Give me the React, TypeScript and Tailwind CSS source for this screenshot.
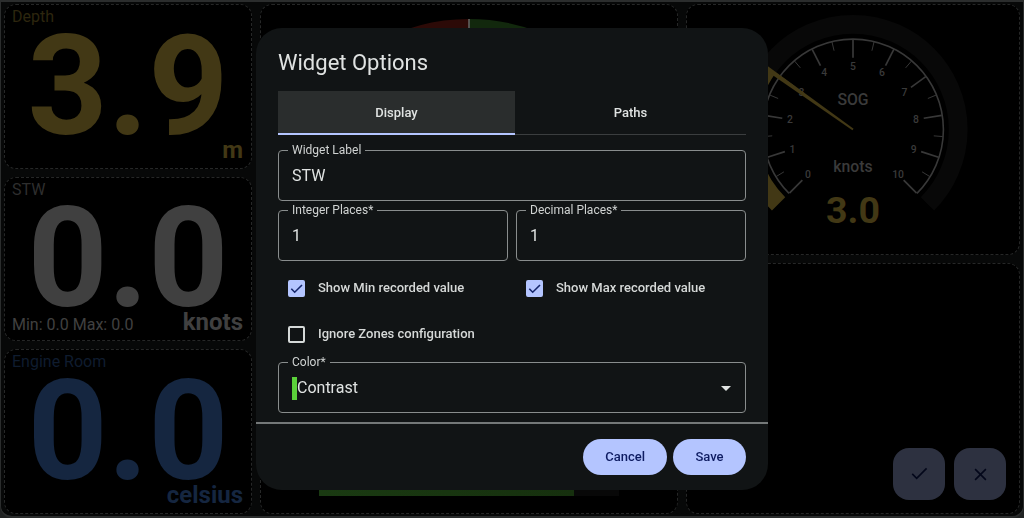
import { useState, type ReactNode } from "react";

type NumericProps = {
  label: string;
  value: string;
  unit: string;
  tone: string;
  labelTone: string;
  range?: string;
};

const cardClass =
  "grid min-h-0 min-w-0 overflow-hidden rounded-xl border border-dashed border-[#262727] bg-black";

function NumericWidget({ label, value, unit, tone, labelTone, range }: NumericProps) {
  return (
    <section className={`${cardClass} grid-rows-[auto_1fr_auto] px-[7px] pt-0.5 pb-1 ${tone}`}>
      <h2 className={`text-base leading-5 ${labelTone}`}>{label}</h2>
      <p className="self-end justify-self-center text-[140px] leading-[100px] font-bold">{value}</p>
      <div className="flex items-end justify-between">
        <span className="text-base leading-[22px]">{range}</span>
        <span className="pr-px text-2xl leading-7 font-bold">{unit}</span>
      </div>
    </section>
  );
}

const polar = (angle: number, radius: number): [number, number] => {
  const rad = (angle * Math.PI) / 180;
  return [Math.sin(rad) * radius, -Math.cos(rad) * radius];
};

function arc(from: number, to: number, radius: number) {
  const [x1, y1] = polar(from, radius);
  const [x2, y2] = polar(to, radius);
  return `M${x1} ${y1}A${radius} ${radius} 0 ${to - from > 180 ? 1 : 0} 1 ${x2} ${y2}`;
}

function SpeedGauge() {
  const ticks = Array.from({ length: 21 }, (_, i) => i);
  return (
    <section className={cardClass}>
      <svg viewBox="-167 -126 334 252" className="size-full" role="img" aria-label="SOG 3.0 knots">
        <path d={arc(-135, 135, 106.5)} fill="none" stroke="#080808" strokeWidth="19" />
        <path d={arc(-135, -54, 106.5)} fill="none" stroke="#423815" strokeWidth="19" />
        <path d={arc(-135, 135, 91.5)} fill="none" stroke="#383838" strokeWidth="1.6" />
        {ticks.map((i) => {
          const angle = -135 + i * 13.5;
          const [x1, y1] = polar(angle, 91);
          const [x2, y2] = polar(angle, i % 2 ? 82 : 72.5);
          return (
            <line key={i} x1={x1} y1={y1} x2={x2} y2={y2} stroke="#383838" strokeWidth={i % 2 ? 1 : 1.7} />
          );
        })}
        {ticks
          .filter((i) => i % 2 === 0)
          .map((i) => {
            const [x, y] = polar(-135 + i * 13.5, 64.5);
            return (
              <text key={i} x={x} y={y + 3.8} textAnchor="middle" fontSize="10.5" fontWeight="500" fill="#3a3a3a">
                {i / 2}
              </text>
            );
          })}
        <path d="M.6-.8-.6.8-90-61-87.500-65Z" fill="#423815" />
        <text y="-25" textAnchor="middle" fontSize="16" fontWeight="500" fill="#3a3a3a">
          SOG
        </text>
        <text y="43" textAnchor="middle" fontSize="16" fontWeight="500" fill="#3a3a3a">
          knots
        </text>
        <text y="95" textAnchor="middle" fontSize="38" fontWeight="700" fill="#423815">
          3.0
        </text>
      </svg>
    </section>
  );
}

function WindWidget() {
  return (
    <section className="flex min-h-0 min-w-0 flex-col items-center justify-between overflow-hidden rounded-xl border border-dashed border-[#262727] bg-black pt-3.5 pb-[17px]">
      <svg viewBox="-191 -191 382 382" className="w-[382px]" aria-hidden="true">
        <path d={arc(-60, 0, 184)} fill="none" stroke="#2c0a07" strokeWidth="14" />
        <path d={arc(0, 60, 184)} fill="none" stroke="#12280d" strokeWidth="14" />
        <path d="M0-191V-177" stroke="#666" strokeWidth="1.500" />
        <path d="M-32.500-182-31-174M32.500-182 31-174" stroke="#444" />
      </svg>
      <div className="flex h-4 w-[300px] bg-[#080808]">
        <div className="w-[85%] bg-linear-to-r from-[#1a3a12] to-[#16300e]" />
      </div>
    </section>
  );
}

function Field({ id, label, children }: { id: string; label: string; children: ReactNode }) {
  return (
    <fieldset className="h-[59px] min-w-0 rounded border border-[#898d8d] pr-2.5 pl-[9px]">
      <legend className="h-4 px-1 text-xs leading-4 text-[#d0d3d2]">
        <label htmlFor={id}>{label}</label>
      </legend>
      <div className="flex h-9 items-center px-1">{children}</div>
    </fieldset>
  );
}

function TextField({ id, label, initial }: { id: string; label: string; initial: string }) {
  return (
    <Field id={id} label={label}>
      <input
        id={id}
        defaultValue={initial}
        className="w-full bg-transparent text-base leading-6 text-[#e0e3e2] outline-none"
      />
    </Field>
  );
}

function Check({ label, initial = false }: { label: string; initial?: boolean }) {
  const [checked, setChecked] = useState(initial);
  return (
    <label className="flex h-10 items-center gap-[13px] pl-2.5 text-[13px] font-medium text-[#d6d9d8]">
      <span className="grid size-[17px]">
        <input
          type="checkbox"
          checked={checked}
          onChange={(e) => setChecked(e.target.checked)}
          className="size-[17px] appearance-none rounded-xs border-2 border-[#d5d9d8] [grid-area:1/1] checked:border-[#b4c5ff] checked:bg-[#b4c5ff]"
        />
        {checked && (
          <svg viewBox="0 0 17 17" className="pointer-events-none size-[17px] [grid-area:1/1]" aria-hidden="true">
            <path d="m3.300 8.800 3.400 3.400 7.300-7.200" fill="none" stroke="#14256b" strokeWidth="1.600" />
          </svg>
        )}
      </span>
      {label}
    </label>
  );
}

function OptionsDialog() {
  const [tab, setTab] = useState("Display");
  return (
    <div
      role="dialog"
      aria-label="Widget Options"
      className="w-full max-w-lg overflow-hidden rounded-[26px] bg-[#111415]"
    >
      <h1 className="px-[22px] pt-5 pb-[13px] text-[22px] leading-[30px] text-[#e0e3e2]">Widget Options</h1>
      <div className="px-[22px] pb-[9px]">
        <div role="tablist" className="grid grid-cols-[237fr_231fr]">
          {["Display", "Paths"].map((name) => (
            <button
              key={name}
              role="tab"
              aria-selected={tab === name}
              onClick={() => setTab(name)}
              className={
                tab === name
                  ? "h-11 border-b-2 border-[#b4c5ff] bg-[#2a2d2d] pt-px text-[13px] font-medium text-[#e0e3e2]"
                  : "h-11 border-b border-[#3b3e3f] text-[13px] font-medium text-[#e0e3e2]"
              }
            >
              {name}
            </button>
          ))}
        </div>
        <div className="mt-[7px] flex flex-col gap-px">
          <TextField id="label" label="Widget Label" initial="STW" />
          <div className="grid grid-cols-2 gap-2">
            <TextField id="integers" label="Integer Places*" initial="1" />
            <TextField id="decimals" label="Decimal Places*" initial="1" />
          </div>
        </div>
        <div className="grid grid-cols-2 gap-x-2 gap-y-1.5 pt-[7px]">
          <Check label="Show Min recorded value" initial />
          <Check label="Show Max recorded value" initial />
          <Check label="Ignore Zones configuration" />
        </div>
        <Field id="color" label="Color*">
          <span className="h-[23px] w-[5px] bg-[#5bd13a]" />
          <select
            id="color"
            defaultValue="Contrast"
            className="min-w-0 flex-1 appearance-none bg-transparent text-base leading-6 text-[#e0e3e2] outline-none"
          >
            <option>Contrast</option>
            <option>Blue</option>
            <option>Yellow</option>
          </select>
          <svg viewBox="0 0 10 5" className="pointer-events-none h-[5px] w-2.5" aria-hidden="true">
            <path d="M0 0h10L5 5Z" fill="#e0e3e2" />
          </svg>
        </Field>
      </div>
      <div className="flex justify-end gap-1.5 border-t-2 border-[#747878] px-[22px] py-[15px] text-[13px] font-medium text-[#0e1c62]">
        <button className="h-9 min-w-[73px] rounded-full bg-[#b4c5ff] px-[22px]">Cancel</button>
        <button className="h-9 min-w-[73px] rounded-full bg-[#b4c5ff] px-[22px]">Save</button>
      </div>
    </div>
  );
}

export default function App() {
  return (
    <div className="h-screen bg-[#202222] font-['Roboto',sans-serif]">
      <main className="grid h-full grid-cols-[248fr_418fr_334fr] gap-2 rounded-b-xl border-x border-t-2 border-b-2 border-[#2b2d2d] bg-[#070808] px-[3px] py-0.5">
        <div className="grid min-h-0 grid-rows-3 gap-2">
          <NumericWidget label="Depth" value="3.9" unit="m" tone="text-[#423815]" labelTone="text-[#2d260e]" />
          <NumericWidget
            label="STW"
            value="0.0"
            unit="knots"
            range="Min: 0.0 Max: 0.0"
            tone="text-[#404040]"
            labelTone="text-[#2e2e2e]"
          />
          <NumericWidget label="Engine Room" value="0.0" unit="celsius" tone="text-[#152640]" labelTone="text-[#0f1c2f]" />
        </div>
        <WindWidget />
        <div className="grid min-h-0 grid-rows-2 gap-2">
          <SpeedGauge />
          <section className="flex min-h-0 items-end justify-end gap-[9px] rounded-xl border border-dashed border-[#262727] bg-black p-[13px]">
            <button aria-label="Accept" className="grid size-[52px] place-items-center rounded-2xl bg-[#2d3140]">
              <svg viewBox="0 0 18 14" className="w-[17px]" aria-hidden="true">
                <path d="m1.300 7.300 4.700 4.700L16.500 1.500" fill="none" stroke="#03071a" strokeWidth="1.700" />
              </svg>
            </button>
            <button aria-label="Close" className="grid size-[52px] place-items-center rounded-2xl bg-[#2d3140]">
              <svg viewBox="0 0 14 14" className="w-[13px]" aria-hidden="true">
                <path d="m1.200 1.200 11.600 11.600M12.800 1.200 1.200 12.800" fill="none" stroke="#03071a" strokeWidth="1.700" />
              </svg>
            </button>
          </section>
        </div>
      </main>
      <div className="fixed inset-0 flex items-center justify-center">
        <OptionsDialog />
      </div>
    </div>
  );
}
